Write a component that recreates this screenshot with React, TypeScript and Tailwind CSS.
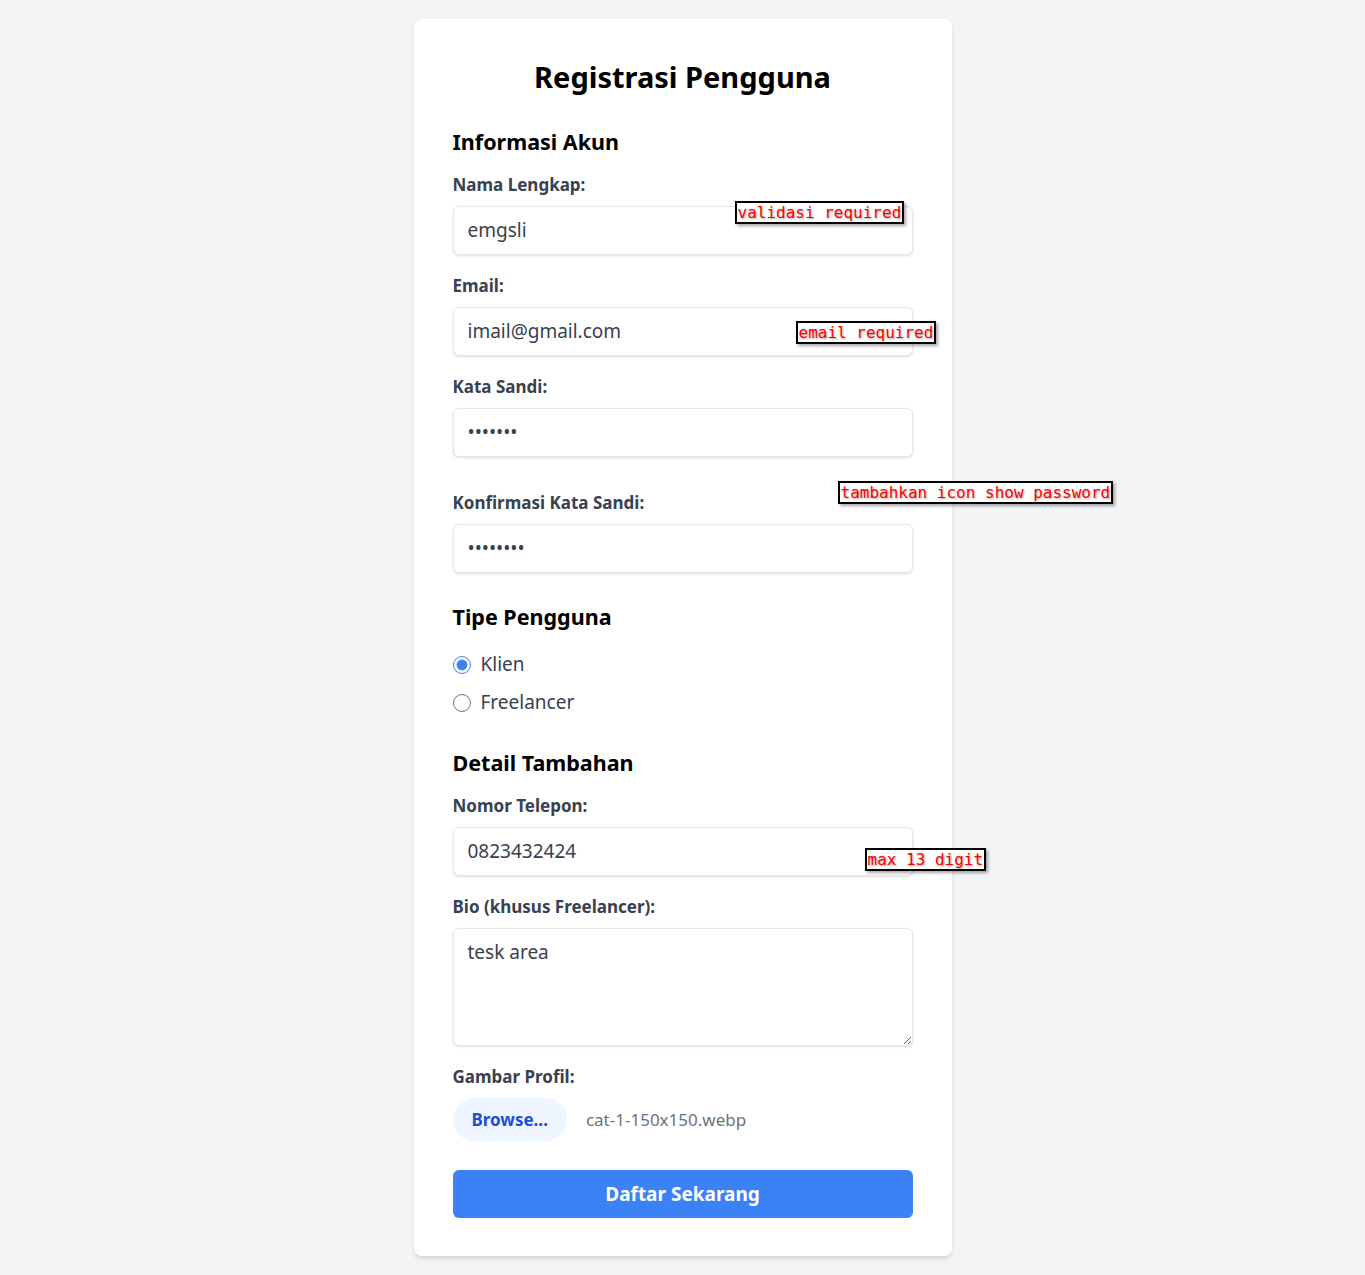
import React from "react";

/* Red review note stuck on top of the form */
function Note({ text, className }: { text: string; className: string }) {
  return (
    <span
      className={`absolute z-10 whitespace-pre border-2 border-black bg-white px-[1px] text-[16px] leading-[19px] text-[#ff0000] shadow-[2px_2px_3px_rgba(0,0,0,0.35)] [text-shadow:1px_1px_2px_rgba(0,0,0,0.35)] ${className}`}
      style={{ fontFamily: '"DejaVu Sans Mono", "Liberation Mono", monospace' }}
    >
      {text}
    </span>
  );
}

function Label({ children }: { children: React.ReactNode }) {
  return (
    <label className="mb-2.5 block text-[17px] leading-[22px] font-bold text-[#374151]">
      {children}
    </label>
  );
}

const inputCls =
  "block w-full rounded-md border border-[#e5e7eb] bg-white px-[14px] py-2.5 text-[19px] leading-[27px] text-[#374151] shadow-sm outline-none";

export default function App() {
  return (
    <div
      className="min-h-screen bg-[#f3f4f6] pt-[19px] pb-5"
      style={{ fontFamily: '"Noto Sans", sans-serif' }}
    >
      <div className="relative mx-auto w-[538px] rounded-lg bg-white px-[39px] pt-10 pb-[38px] shadow-md">
        <h1 className="mb-[33px] text-center text-[29px] leading-9 font-bold text-black">
          Registrasi Pengguna
        </h1>

        {/* Informasi Akun */}
        <h2 className="mb-[18px] text-[21.5px] leading-7 font-bold text-black">Informasi Akun</h2>

        <div className="mb-5">
          <Label>Nama Lengkap:</Label>
          <input type="text" defaultValue="emgsli" className={inputCls} />
        </div>

        <div className="mb-5">
          <Label>Email:</Label>
          <input type="email" defaultValue="imail@gmail.com" className={inputCls} />
        </div>

        <div className="mb-[35px]">
          <Label>Kata Sandi:</Label>
          <input type="password" defaultValue="1234567" className={inputCls} />
        </div>

        <div className="mb-[30px]">
          <Label>Konfirmasi Kata Sandi:</Label>
          <input type="password" defaultValue="12345678" className={inputCls} />
        </div>

        {/* Tipe Pengguna */}
        <h2 className="mb-5 text-[21.5px] leading-7 font-bold text-black">Tipe Pengguna</h2>
        <div className="mb-[33px] flex flex-col gap-[11px]">
          <label className="flex items-center gap-2.5 text-[19px] leading-[27px] text-[#374151]">
            <input
              type="radio"
              name="tipe"
              defaultChecked
              className="m-0 h-[18px] w-[18px] accent-[#3b82f6]"
            />
            Klien
          </label>
          <label className="flex items-center gap-2.5 text-[19px] leading-[27px] text-[#374151]">
            <input type="radio" name="tipe" className="m-0 h-[18px] w-[18px] accent-[#3b82f6]" />
            Freelancer
          </label>
        </div>

        {/* Detail Tambahan */}
        <h2 className="mb-[18px] text-[21.5px] leading-7 font-bold text-black">Detail Tambahan</h2>

        <div className="mb-5">
          <Label>Nomor Telepon:</Label>
          <input type="tel" defaultValue="0823432424" className={inputCls} />
        </div>

        <div className="mb-5">
          <Label>Bio (khusus Freelancer):</Label>
          <textarea
            defaultValue="tesk area"
            spellCheck={false}
            className={`${inputCls} h-[118px] resize-y`}
          />
        </div>

        <div className="mb-[29px]">
          <Label>Gambar Profil:</Label>
          <div className="flex items-center gap-[19px]">
            <span className="rounded-full bg-[#eff6ff] px-[19px] py-2.5 text-[17px] leading-[23px] font-bold text-[#1d4ed8]">
              Browse...
            </span>
            <span className="text-[17px] text-[#6b7280]">cat-1-150x150.webp</span>
          </div>
        </div>

        <button className="block h-12 w-full rounded-md bg-[#3b82f6] text-[19px] font-bold text-white">
          Daftar Sekarang
        </button>

        <Note text="validasi required" className="top-[182px] left-[321px]" />
        <Note text="email required" className="top-[302px] left-[382px]" />
        <Note text="tambahkan icon show password" className="top-[462px] left-[424px]" />
        <Note text="max 13 digit" className="top-[829px] left-[451px]" />
      </div>
    </div>
  );
}
